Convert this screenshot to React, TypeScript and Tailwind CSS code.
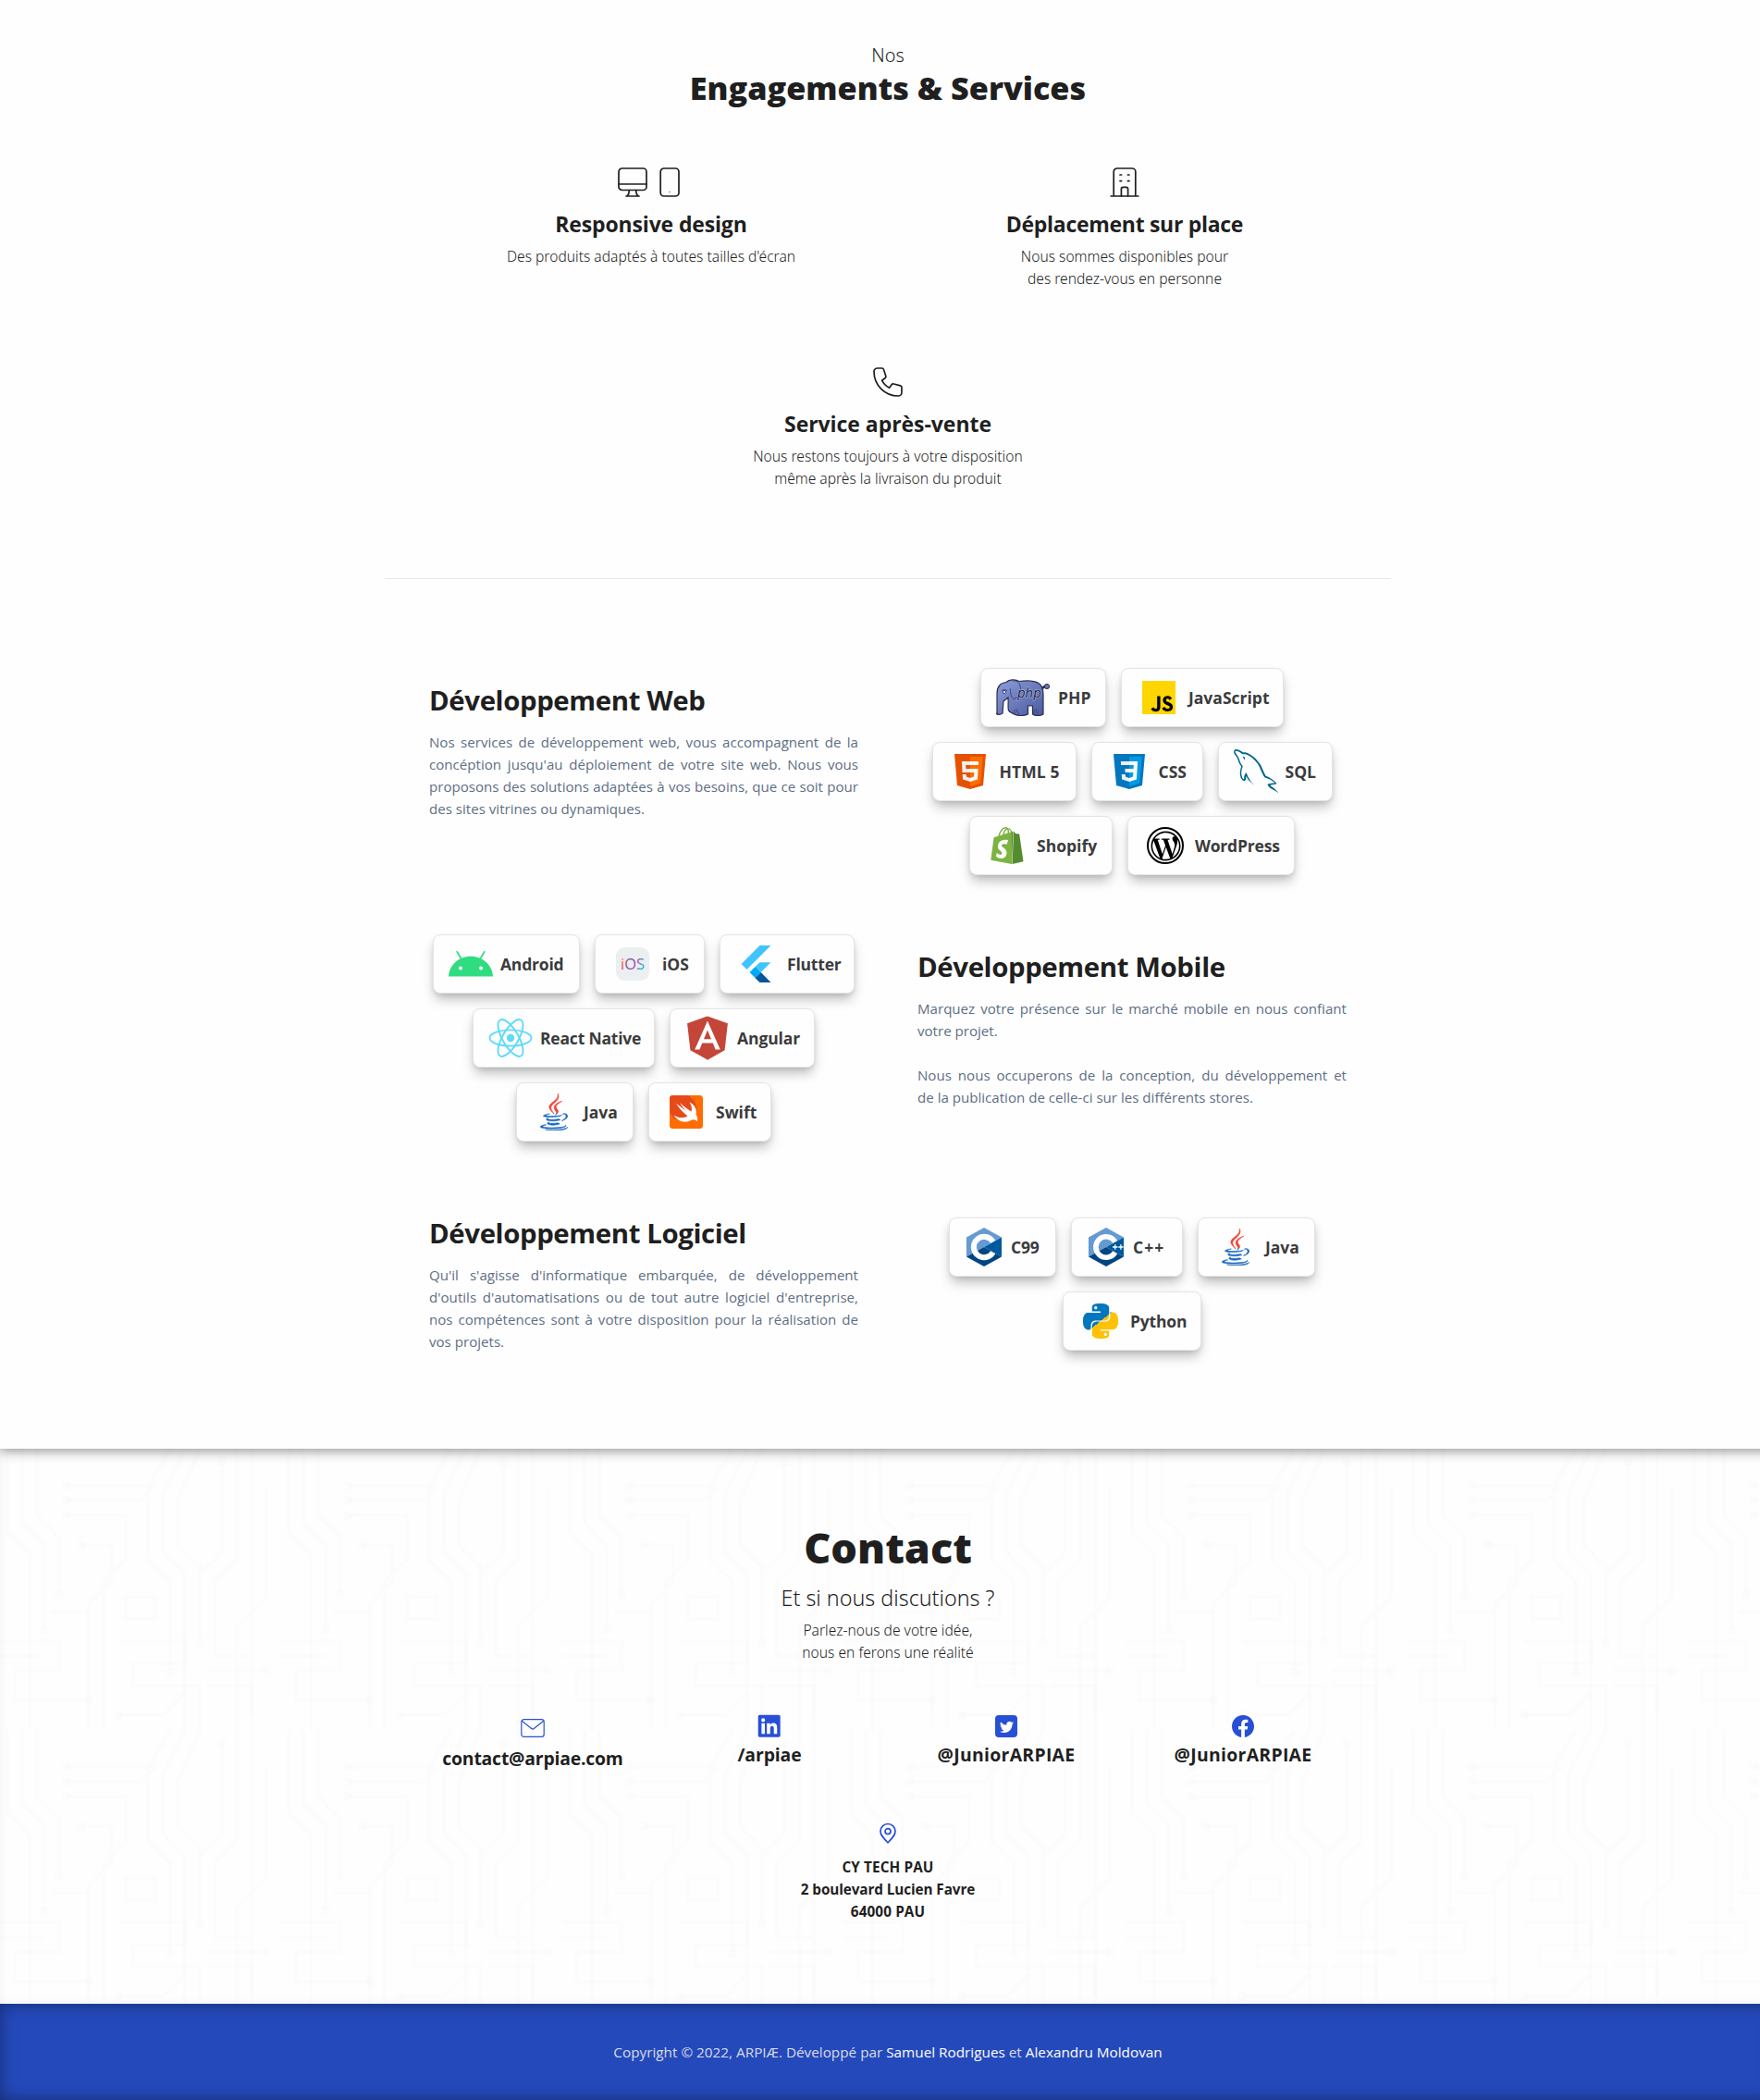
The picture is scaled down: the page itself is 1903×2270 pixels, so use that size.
import type { ReactNode } from "react";
import { FaAngular, FaJava, FaLinkedin, FaWordpressSimple } from "react-icons/fa";
import { BsFacebook, BsTwitter } from "react-icons/bs";
import { SiJavascript, SiPython, SiShopify } from "react-icons/si";
import { GrMysql } from "react-icons/gr";

/* ---------- Feature icons ---------- */

const line = {
  fill: "none",
  stroke: "currentColor",
  strokeWidth: 1.7,
  strokeLinecap: "round" as const,
  strokeLinejoin: "round" as const,
};

const MonitorIcon = () => (
  <svg className="size-8" viewBox="0 0 32 32" {...line}>
    <rect x="1" y="1" width="30" height="23.5" rx="3.6" />
    <path d="M1 18h30M12.4 24.5c0 3-.8 5-2.4 6.5M19.6 24.5c0 3 .8 5 2.4 6.5M9 31h14" />
  </svg>
);

const PhoneIcon = () => (
  <svg className="size-8" viewBox="0 0 32 32" {...line}>
    <rect x="6.2" y="1" width="19.8" height="30" rx="3.6" />
    <path d="M16 26.6h.01" strokeWidth="1.2" />
  </svg>
);

const BuildingIcon = () => (
  <svg className="size-8" viewBox="0 0 32 32" {...line}>
    <path d="M1.2 31h29.6M4.2 31V4.6A3.6 3.6 0 0 1 7.8 1h16.4a3.6 3.6 0 0 1 3.6 3.6V31" />
    <path d="M12.4 31v-7.6a2 2 0 0 1 2-2h3.2a2 2 0 0 1 2 2V31" />
    <path d="M11 8h1.6M19.4 8H21M11 14.6h1.6M19.4 14.6H21" />
  </svg>
);

const CallIcon = () => (
  <svg className="size-8" viewBox="0 0 32 32" {...line}>
    <path d="M4.4 1h5.200a2 2 0 0 1 1.900 1.500l2.300 6.900a2 2 0 0 1-.8 2.300L9.600 14.200a17 17 0 0 0 8 8l2.500-3.400a2 2 0 0 1 2.300-.8l7.100 1.900A2 2 0 0 1 31 21.900v5.300a3.800 3.800 0 0 1-3.800 3.800C12.700 31 1 19.300 1 4.800A3.800 3.800 0 0 1 4.400 1z" />
  </svg>
);

/* ---------- Technology logos ---------- */

const PhpLogo = () => (
  <svg className="h-10 w-[59px]" viewBox="0 0 59 40">
    <defs>
      <linearGradient id="php-skin" x1="0" y1="0" x2="1" y2="1">
        <stop offset="0" stopColor="#8f9fdc" />
        <stop offset="1" stopColor="#4a5a9c" />
      </linearGradient>
    </defs>
    <path d="M50 10c2-2 3-2.500 5-2" fill="none" stroke="#2a2f52" strokeWidth="2.600" />
    <circle cx="55" cy="8" r="2.600" fill="#6576b8" stroke="#2a2f52" />
    <path
      d="M1 38V16C1 8 5 4 11 3.500 14 .5 21 0 25 2.500c8-1 17-.500 21 2 4 2.500 5 6 5 12V38c-3 2-9 2-11.500 0v-9h-5v9c-4 2-11 2-15 0-2-1.500-5-2-6-4-1-3 0-8-.500-14-2 2-4 3-5 4l-1 13c-2 1.500-5 1.500-7 0z"
      fill="url(#php-skin)"
      stroke="#2a2f52"
      strokeWidth="1.200"
    />
    <path d="M18 2c7-1 9 5 8.500 11-.5 5-4 8-8 8.500-3-3-3-7-3-11M6 13c2-2 4-2 6 0M20 38v-5m5 5c-2-2-3-4-3-6m19 6v-5m4 5-2-6" fill="none" stroke="#39447c" />
    <circle cx="9" cy="14" r="1.600" fill="#fff" stroke="#39447c" />
    <text x="23" y="20" className="text-[13.5px] italic" fontFamily="DejaVu Sans" fill="#232747" stroke="#a9b5e6" strokeWidth="1.200" paintOrder="stroke">
      php
    </text>
  </svg>
);

const JsLogo = () => (
  <span className="flex size-9 items-center justify-center bg-black">
    <SiJavascript className="size-9 text-[#ffd600]" />
  </span>
);

const HtmlLogo = () => (
  <svg className="size-12" viewBox="0 0 48 48">
    <path fill="#E65100" d="M41,5H7l3,34l14,4l14-4L41,5z" />
    <path fill="#FF6D00" d="M24 8L24 39.9 35.2 36.7 37.7 8z" />
    <path fill="#FFF" d="M24,25v-4h8.600l-0.700,11.500L24,35.100v-4.200l4.100-1.400l0.300-4.500H24z M32.900,17l0.300-4H24v4H32.900z" />
    <path fill="#EEE" d="M24,30.900v4.200l-7.900-2.600L15.700,27h4l0.200,2.500L24,30.900z M19.100,17H24v-4h-9.100l0.700,12H24v-4h-4.600L19.100,17z" />
  </svg>
);

const CssLogo = () => (
  <svg className="size-12" viewBox="0 0 48 48">
    <path fill="#0277BD" d="M41,5H7l3,34l14,4l14-4L41,5z" />
    <path fill="#039BE5" d="M24 8L24 39.9 35.2 36.7 37.7 8z" />
    <path fill="#FFF" d="M33.100 13L24 13 24 17 28.900 17 28.600 21 24 21 24 25 28.400 25 28.100 29.500 24 30.900 24 35.100 31.900 32.500 32.600 21z" />
    <path fill="#EEE" d="M24,13v4h-8.900l-0.300-4H24z M19.400,21l0.200,4H24v-4H19.400z M19.800,27h-4l0.300,5.500l7.900,2.600v-4.200l-4.100-1.400L19.800,27z" />
  </svg>
);

const SqlLogo = () => <GrMysql className="size-12 [&_*]:fill-[#00678c]" />;

const ShopifyLogo = () => (
  <>
    <svg className="absolute size-0">
      <defs>
        <linearGradient id="shopify-bag" x1="0" y1="0" x2="1" y2="0">
          <stop offset="0.640" stopColor="#7cb342" />
          <stop offset="0.640" stopColor="#558b2f" />
        </linearGradient>
      </defs>
    </svg>
    <SiShopify className="size-10 fill-[url(#shopify-bag)]" />
  </>
);

const WordPressLogo = () => (
  <span className="flex size-10 rounded-full border-2 border-black p-[1.5px] text-black">
    <FaWordpressSimple className="size-full" />
  </span>
);

const AndroidLogo = () => (
  <svg className="size-12" viewBox="0 0 48 48">
    <path fill="#30dc80" d="M0 37.500C.6 25.500 10.500 15.700 24 15.700S47.400 25.500 48 37.500z" />
    <path stroke="#30dc80" strokeWidth="1.700" strokeLinecap="round" d="m9.200 10.800 4.400 7.400M38.800 10.800l-4.400 7.400" />
    <circle cx="13" cy="28.600" r="2" fill="#fff" />
    <circle cx="35" cy="28.600" r="2" fill="#fff" />
  </svg>
);

const IosLogo = () => (
  <svg className="size-12" viewBox="0 0 48 48">
    <defs>
      <linearGradient id="ios-word" x1="0" y1="0" x2="1" y2="0.300">
        <stop offset="0" stopColor="#fbb03b" />
        <stop offset="0.250" stopColor="#f0505a" />
        <stop offset="0.550" stopColor="#4a4fb5" />
        <stop offset="0.750" stopColor="#c846a8" />
        <stop offset="1" stopColor="#1bb5c9" />
      </linearGradient>
    </defs>
    <rect x="6" y="6" width="36" height="36" rx="9" fill="#eceff1" />
    <text x="24" y="30" textAnchor="middle" className="text-[16.5px]" fill="url(#ios-word)">
      iOS
    </text>
  </svg>
);

const FlutterLogo = () => (
  <svg className="size-12" viewBox="0 0 48 48">
    <path fill="#40c4ff" d="M26.500 4H38.500L12.500 30 6.600 24zM26.500 22.200H38.500L27.700 33.100 21.600 27z" />
    <path fill="#03a9f4" d="m15.600 33.100 6-6 6.100 6-6.100 6.100z" />
    <path fill="#01579b" d="m21.600 39.200 6.100-6.100L38.500 44H26.500z" />
  </svg>
);

const ReactLogo = () => (
  <svg className="size-12" viewBox="0 0 48 48" fill="none" stroke="#61dafb" strokeWidth="1.900">
    <circle cx="24" cy="24" r="4.200" fill="#61dafb" stroke="none" />
    <ellipse cx="24" cy="24" rx="22.500" ry="8.600" />
    <ellipse cx="24" cy="24" rx="22.500" ry="8.600" transform="rotate(60 24 24)" />
    <ellipse cx="24" cy="24" rx="22.500" ry="8.600" transform="rotate(120 24 24)" />
  </svg>
);

const AngularLogo = () => <FaAngular className="size-[54px] shrink-0 text-[#c44638]" />;

const JavaLogo = () => (
  <>
    <svg className="absolute size-0">
      <defs>
        <linearGradient id="java-cup" x1="0" y1="0" x2="0" y2="1">
          <stop offset="0.520" stopColor="#f44336" />
          <stop offset="0.520" stopColor="#1565c0" />
        </linearGradient>
      </defs>
    </svg>
    <FaJava className="size-10 fill-[url(#java-cup)] stroke-[url(#java-cup)] [stroke-width:7px]" />
  </>
);

const SwiftLogo = () => (
  <svg className="size-9" viewBox="0 0 36 36">
    <rect width="36" height="36" rx="3.500" fill="#ff6d00" />
    <path fill="#e64a19" d="M3.500 0H20c6 4 10 10 9.500 18L20 26 5 25.500.5 19 0 3.500A3.500 3.500 0 0 1 3.500 0z" />
    <path
      fill="#fff"
      d="M4.500 21.500c4.500 7 12.500 9 18.500 5.500 3-1.500 5-1 7 1.200.6-3-.3-5.700-1.500-7.700C30 15 27 10 21.500 7.500c2.500 3.500 3 7.500 2 10C19 14.500 14 11 11 8c2 3.500 5 7 7 9-4-3-8-6-11-8.500 3 5.500 8 10.500 12.500 14-4.500 2.500-10.500 2-15-1z"
    />
  </svg>
);

const CFamilyLogo = ({ plus }: { plus?: boolean }) => (
  <svg className="h-[42px] w-[38px]" viewBox="0 0 38 42">
    <path fill="#659ad2" d="M19 0 38 10.500 19 21 0 31.500v-21z" />
    <path fill="#00599c" d="M38 10.500v21L19 21z" />
    <path fill="#004482" d="M0 31.500 19 21l19 10.500L19 42z" />
    <path d="M28.700 15.300a11.200 11.200 0 1 0 0 11.400" fill="none" stroke="#fff" strokeWidth={plus ? 5.6 : 6} />
    {plus && <path d="M26 21h5.500M28.750 18.300v5.400M32.300 21h5.200M34.900 18.300v5.400" stroke="#fff" strokeWidth="1.300" />}
  </svg>
);

const PythonLogo = () => (
  <>
    <svg className="absolute size-0">
      <defs>
        <linearGradient id="python-snakes" x1="0.100" y1="0" x2="0.900" y2="1">
          <stop offset="0.500" stopColor="#0277bd" />
          <stop offset="0.500" stopColor="#ffc107" />
        </linearGradient>
      </defs>
    </svg>
    <SiPython className="size-[38px] fill-[url(#python-snakes)]" />
  </>
);

/* ---------- Contact icons ---------- */

const MailIcon = () => (
  <svg className="size-7" viewBox="0 0 28 28" fill="none" stroke="currentColor" strokeWidth="1.200" strokeLinejoin="round">
    <rect x="1.800" y="4.600" width="24.400" height="18.800" rx="2.600" />
    <path d="m2.300 6.300 10.400 8.200a2.100 2.100 0 0 0 2.600 0l10.400-8.200" />
  </svg>
);

const LinkedInIcon = () => (
  <span className="flex size-6 items-center justify-center">
    <FaLinkedin className="size-[27.4px] shrink-0" />
  </span>
);

const TwitterIcon = () => (
  <span className="flex size-6 items-center justify-center rounded bg-[#2850d6]">
    <BsTwitter className="size-[15px] text-white" />
  </span>
);

const PinIcon = () => (
  <svg className="size-6" viewBox="0 0 24 24" fill="none" stroke="currentColor" strokeWidth="1.700" strokeLinejoin="round">
    <path d="M12 21.800C7.500 17.200 4 13.800 4 9.500a8 8 0 0 1 16 0c0 4.300-3.500 7.700-8 12.300z" />
    <circle cx="12" cy="9.600" r="3" />
  </svg>
);

/* ---------- Building blocks ---------- */

function Feature({ icon, title, tracking, children }: { icon: ReactNode; title: string; tracking: string; children: ReactNode }) {
  return (
    <div className="flex w-[512px] flex-col items-center pb-[84px] text-center">
      <div className="flex gap-2">{icon}</div>
      <h3 className={`mt-[13px] text-[23px] leading-8 font-bold ${tracking}`}>{title}</h3>
      <p className="mt-[7px] font-['Noto_Sans',sans-serif] text-[15.6px] leading-6 font-[350]">{children}</p>
    </div>
  );
}

function Tech({ width, slot = "w-12", label, tracking = "tracking-[-0.2px]", children }: { width: string; slot?: string; label: string; tracking?: string; children: ReactNode }) {
  return (
    <div className={`flex h-16 shrink-0 items-center gap-2 rounded-lg border border-[#e4e4e4] bg-[#fefefe] pl-4 shadow-[0_8px_13px_-2px_rgb(0_0_0/0.26),0_2px_5px_-1px_rgb(0_0_0/0.1)] ${width}`}>
      <span className={`flex h-12 shrink-0 items-center justify-center ${slot}`}>{children}</span>
      <span className={`text-[17.5px] leading-7 font-bold whitespace-nowrap text-[#3b3b3d] ${tracking}`}>{label}</span>
    </div>
  );
}

const TechRow = ({ children }: { children: ReactNode }) => <div className="flex justify-center gap-4">{children}</div>;

function Skill({ title, children }: { title: string; children: ReactNode }) {
  return (
    <div className="w-[464px] pt-[25px]">
      <h2 className="text-[29.4px] leading-9 font-bold tracking-[-0.4px]">{title}</h2>
      <div className="mt-[15px] text-justify text-[15.1px] leading-6 text-[#5e6e85]">{children}</div>
    </div>
  );
}

function Contact({ icon, tracking = "tracking-[-0.2px]", children }: { icon: ReactNode; tracking?: string; children: ReactNode }) {
  return (
    <div className="flex w-64 flex-col items-center text-[#2850d6]">
      {icon}
      <span className={`mt-[5px] text-[19.4px] leading-7 font-bold text-[#1f1f1f] ${tracking}`}>{children}</span>
    </div>
  );
}

/* Faint circuit-board texture behind the contact section */
const Circuit = () => (
  <svg className="absolute inset-0 size-full" aria-hidden="true">
    <defs>
      <pattern id="circuit" width="304" height="304" patternUnits="userSpaceOnUse">
        <g fill="none" stroke="#000" strokeOpacity="0.008" strokeWidth="4">
          <path d="M8 0v90l24 24v190M24 0v80l24 24v90M40 0v72l24 24v60M72 40h96M72 56h80l16-16M72 72h64v48l-24 24v160M88 104h32v40l-24 24v136M184 0l-24 40v80l24 24v96M200 0l-24 48v64l24 24v168M216 0l-24 56v48l24 24v80M240 16v96l-24 24M256 0v120l-24 24v80h40M272 0v304M288 40v120l-32 32v112" />
          <path d="M0 208h64v32H16v32h80M0 224h48M128 208h72v24h-56v24h72v48M128 288h48l24-24M224 240h64M224 256h48v32M56 176h40M136 160h32v24h-32z" />
        </g>
        <g fill="#000" fillOpacity="0.008">
          <circle cx="72" cy="40" r="5" />
          <circle cx="72" cy="56" r="5" />
          <circle cx="72" cy="72" r="5" />
          <circle cx="88" cy="104" r="5" />
          <circle cx="64" cy="158" r="5" />
          <circle cx="48" cy="196" r="5" />
          <circle cx="240" cy="14" r="5" />
          <circle cx="184" cy="242" r="5" />
          <circle cx="216" cy="210" r="5" />
          <circle cx="128" cy="288" r="5" />
          <circle cx="96" cy="272" r="5" />
          <circle cx="288" cy="240" r="5" />
        </g>
      </pattern>
    </defs>
    <rect width="100%" height="100%" fill="url(#circuit)" />
  </svg>
);

export default function App() {
  return (
    <div className="w-full overflow-hidden bg-[#fefefe] font-['Open_Sans',sans-serif] text-[#1f1f1f]">
      <div className="w-[1920px]">
        <main className="relative z-10 flex h-[1566px] flex-col items-center bg-[#fefefe] pt-[46px] shadow-[0_3px_12px_rgb(0_0_0/0.38)]">
          <p className="font-['Noto_Sans',sans-serif] text-[19.8px] leading-7 font-[350]">Nos</p>
          <h1 className="mt-px text-[34.2px] leading-10 font-extrabold">Engagements &amp; Services</h1>

          <div className="mt-[66px] flex w-[1024px] flex-wrap justify-center">
            <Feature icon={<><MonitorIcon /><PhoneIcon /></>} title="Responsive design" tracking="tracking-[-0.15px]">
              Des produits adaptés à toutes tailles d'écran
            </Feature>
            <Feature icon={<BuildingIcon />} title="Déplacement sur place" tracking="tracking-[-0.3px]">
              Nous sommes disponibles pour
              <br />
              des rendez-vous en personne
            </Feature>
            <Feature icon={<CallIcon />} title="Service après-vente" tracking="tracking-[-0.05px]">
              Nous restons toujours à votre disposition
              <br />
              même après la livraison du produit
            </Feature>
          </div>

          <hr className="mt-3 w-[1088px] border-[#e5e7eb]" />

          <section className="mt-[88px] flex h-[288px] shrink-0 gap-16">
            <Skill title="Développement Web">
              <p>Nos services de développement web, vous accompagnent de la concéption jusqu'au déploiement de votre site web. Nous vous proposons des solutions adaptées à vos besoins, que ce soit pour des sites vitrines ou dynamiques.</p>
            </Skill>
            <div className="flex w-[464px] flex-col gap-4 pt-2">
              <TechRow>
                <Tech width="w-[136px]" slot="w-[59px]" label="PHP" tracking="tracking-[0px]"><PhpLogo /></Tech>
                <Tech width="w-[176px]" label="JavaScript" tracking="tracking-[0px]"><JsLogo /></Tech>
              </TechRow>
              <TechRow>
                <Tech width="w-[156px]" label="HTML 5" tracking="tracking-[0.1px]"><HtmlLogo /></Tech>
                <Tech width="w-[121px]" label="CSS" tracking="tracking-[0px]"><CssLogo /></Tech>
                <Tech width="w-[124px]" label="SQL" tracking="tracking-[0px]"><SqlLogo /></Tech>
              </TechRow>
              <TechRow>
                <Tech width="w-[155px]" label="Shopify" tracking="tracking-[0px]"><ShopifyLogo /></Tech>
                <Tech width="w-[181px]" label="WordPress"><WordPressLogo /></Tech>
              </TechRow>
            </div>
          </section>

          <section className="flex h-[288px] shrink-0 gap-16">
            <div className="flex w-[464px] flex-col gap-4 pt-2">
              <TechRow>
                <Tech width="w-[159px]" label="Android"><AndroidLogo /></Tech>
                <Tech width="w-[119px]" label="iOS" tracking="tracking-[0px]"><IosLogo /></Tech>
                <Tech width="w-[146px]" label="Flutter"><FlutterLogo /></Tech>
              </TechRow>
              <TechRow>
                <Tech width="w-[197px]" label="React Native"><ReactLogo /></Tech>
                <Tech width="w-[157px]" label="Angular" tracking="tracking-[-0.1px]"><AngularLogo /></Tech>
              </TechRow>
              <TechRow>
                <Tech width="w-[127px]" label="Java" tracking="tracking-[0px]"><JavaLogo /></Tech>
                <Tech width="w-[133px]" label="Swift" tracking="tracking-[0px]"><SwiftLogo /></Tech>
              </TechRow>
            </div>
            <Skill title="Développement Mobile">
              <p>Marquez votre présence sur le marché mobile en nous confiant votre projet.</p>
              <p className="mt-6">Nous nous occuperons de la conception, du développement et de&nbsp;la&nbsp;publication de celle-ci sur les différents stores.</p>
            </Skill>
          </section>

          <section className="flex shrink-0 gap-16">
            <Skill title="Développement Logiciel">
              <p>Qu'il s'agisse d'informatique embarquée, de développement d'outils d'automatisations ou de tout autre logiciel d'entreprise, nos compétences sont à votre disposition pour la réalisation de vos projets.</p>
            </Skill>
            <div className="flex w-[464px] flex-col gap-4 pt-[26px]">
              <TechRow>
                <Tech width="w-[116px]" slot="w-[42px]" label="C99"><CFamilyLogo /></Tech>
                <Tech width="w-[121px]" slot="w-[42px]" label="C++" tracking="tracking-[1px]"><CFamilyLogo plus /></Tech>
                <Tech width="w-[127px]" label="Java" tracking="tracking-[0px]"><JavaLogo /></Tech>
              </TechRow>
              <TechRow>
                <Tech width="w-[150px]" label="Python"><PythonLogo /></Tech>
              </TechRow>
            </div>
          </section>
        </main>

        <section className="relative h-[600px] shadow-[inset_0_0_10px_rgb(0_0_0/0.06)]">
          <Circuit />
          <div className="relative flex flex-col items-center pt-[83px]">
            <h2 className="text-[45px] leading-[48px] font-extrabold">Contact</h2>
            <p className="mt-[14px] font-['Noto_Sans',sans-serif] text-[23.3px] leading-8 font-[350]">Et si nous discutions ?</p>
            <p className="mt-[7px] text-center font-['Noto_Sans',sans-serif] text-[15.6px] leading-6 font-[350]">
              Parlez-nous de votre idée,
              <br />
              nous en ferons une réalité
            </p>

            <div className="mt-14 flex">
              <Contact icon={<MailIcon />}>contact@arpiae.com</Contact>
              <Contact icon={<LinkedInIcon />} tracking="tracking-[-0.1px]">/arpiae</Contact>
              <Contact icon={<TwitterIcon />} tracking="tracking-[0.3px]">@JuniorARPIAE</Contact>
              <Contact icon={<BsFacebook className="size-6" />} tracking="tracking-[0.3px]">@JuniorARPIAE</Contact>
            </div>

            <div className="mt-[55px] flex flex-col items-center text-[#2850d6]">
              <PinIcon />
              <address className="mt-3 text-center text-[15.3px] leading-6 font-bold tracking-[-0.1px] text-[#1f1f1f] not-italic">
                <span className="tracking-[0.1px]">CY TECH PAU</span>
                <br />
                2 boulevard Lucien Favre
                <br />
                <span className="tracking-[0.1px]">64000 PAU</span>
              </address>
            </div>
          </div>
        </section>

        <footer className="h-[104px] bg-[#2449bb] pt-10 text-center text-[15.3px] leading-6 text-[#d9dce4] shadow-[inset_0_0_18px_rgb(0_0_0/0.4)]">
          Copyright © 2022, ARPIÆ. Développé par <span className="text-white">Samuel Rodrigues</span> et <span className="text-white">Alexandru Moldovan</span>
        </footer>
      </div>
    </div>
  );
}
